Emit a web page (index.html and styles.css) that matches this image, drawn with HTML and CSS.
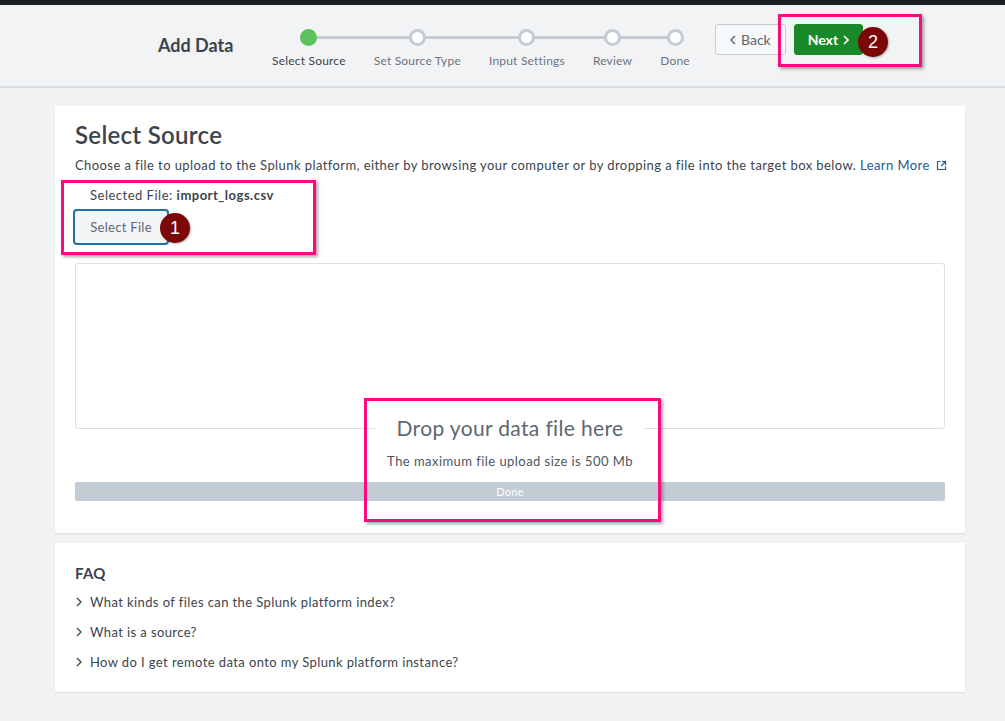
FILE: index.html
```html
<!DOCTYPE html>
<html lang="en">
<head>
<meta charset="utf-8">
<title>Add Data</title>
<link rel="stylesheet" href="styles.css">
</head>
<body>
<div class="topbar"></div>
<header class="header">
  <h1 class="title">Add Data</h1>
  <ol class="stepper">
    <li class="step active"><span class="dot"></span><span class="label">Select Source</span></li>
    <li class="step"><span class="dot"></span><span class="label">Set Source Type</span></li>
    <li class="step"><span class="dot"></span><span class="label">Input Settings</span></li>
    <li class="step"><span class="dot"></span><span class="label">Review</span></li>
    <li class="step"><span class="dot"></span><span class="label">Done</span></li>
  </ol>
  <div class="actions">
    <button class="btn btn-back"><svg class="chev" width="6" height="10" viewBox="0 0 6 10"><path d="M5 1L1 5l4 4" fill="none" stroke="currentColor" stroke-width="1.5"/></svg>Back</button>
    <button class="btn btn-next">Next<svg class="chev" width="6" height="10" viewBox="0 0 6 10"><path d="M1 1l4 4-4 4" fill="none" stroke="currentColor" stroke-width="1.7"/></svg></button>
  </div>
  <span class="annot annot-next"></span>
  <span class="badge badge-2">2</span>
</header>

<main class="page">
  <section class="card source">
    <h2 class="heading">Select Source</h2>
    <p class="desc">Choose a file to upload to the Splunk platform, either by browsing your computer or by dropping a file into the target box below. <a class="learn" href="#">Learn More <svg width="11" height="11" viewBox="0 0 11 11"><path d="M4.5 1.5h-3v8h8v-3" fill="none" stroke="currentColor" stroke-width="1.2"/><path d="M6 1.5h3.5V5M9.5 1.5L5 6" fill="none" stroke="currentColor" stroke-width="1.2"/></svg></a></p>
    <p class="selected">Selected File: <strong>import_logs.csv</strong></p>
    <button class="btn-select">Select File</button>
    <div class="dropzone"></div>
    <div class="drop-legend">Drop your data file here</div>
    <p class="max">The maximum file upload size is 500 Mb</p>
    <div class="progress">Done</div>

    <span class="annot annot-file"></span>
    <span class="badge badge-1">1</span>
    <span class="annot annot-drop"></span>
  </section>

  <section class="card faq">
    <h3 class="faq-title">FAQ</h3>
    <ul class="faq-list">
      <li><svg width="6" height="10" viewBox="0 0 6 10"><path d="M1 1l4 4-4 4" fill="none" stroke="currentColor" stroke-width="1.3"/></svg>What kinds of files can the Splunk platform index?</li>
      <li><svg width="6" height="10" viewBox="0 0 6 10"><path d="M1 1l4 4-4 4" fill="none" stroke="currentColor" stroke-width="1.3"/></svg>What is a source?</li>
      <li><svg width="6" height="10" viewBox="0 0 6 10"><path d="M1 1l4 4-4 4" fill="none" stroke="currentColor" stroke-width="1.3"/></svg>How do I get remote data onto my Splunk platform instance?</li>
    </ul>
  </section>
</main>
</body>
</html>
```

FILE: styles.css
```css
* { box-sizing: border-box; }
html, body { margin: 0; padding: 0; }
body {
  background: #f0f2f4;
  font-family: Lato, "Open Sans", "Liberation Sans", sans-serif;
  color: #3c444d;
  width: 1005px;
  min-height: 721px;
}
.topbar { height: 5px; background: #1b1e22; }

.header {
  position: relative;
  height: 83px;
  background: #f2f3f5;
  border-bottom: 2px solid #d9dde2;
  display: flex;
  align-items: flex-start;
  padding-left: 158px;
}
.title {
  margin: 30px 0 0;
  font-size: 18px;
  line-height: 20px;
  font-weight: 700;
  color: #3c444d;
  width: 75px;
  white-space: nowrap;
}
.stepper {
  position: relative;
  list-style: none;
  margin: 24px 0 0 39px;
  padding: 0;
  display: flex;
  gap: 28px;
}
.stepper::before {
  content: "";
  position: absolute;
  left: 35px;
  right: 14px;
  top: 7px;
  height: 3px;
  background: #c3cbd4;
}
.step {
  position: relative;
  display: flex;
  flex-direction: column;
  align-items: center;
}
.dot {
  width: 17px;
  height: 17px;
  border-radius: 50%;
  background: #fff;
  border: 3px solid #c3cbd4;
}
.step.active .dot { background: #5cc05c; border-color: #5cc05c; }
.label {
  margin-top: 8px;
  font-size: 12px;
  line-height: 14px;
  letter-spacing: 0.2px;
  color: #6b7480;
  white-space: nowrap;
}
.step.active .label { color: #3c444d; }

.actions {
  display: flex;
  gap: 8px;
  margin: 19px 0 0 25px;
}
.btn {
  height: 31px;
  border-radius: 3px;
  font-family: inherit;
  font-size: 14px;
  display: flex;
  align-items: center;
  justify-content: center;
  gap: 5px;
  padding: 0;
}
.btn-back {
  width: 71px;
  background: #f7f8fa;
  border: 1px solid #c3cbd4;
  color: #5c6773;
}
.btn-next {
  width: 69px;
  background: #1a8929;
  border: 1px solid #1a8929;
  color: #fff;
  font-weight: 700;
}

.annot {
  position: absolute;
  border: 3px solid #fb0a80;
  box-shadow: 2px 2px 3px rgba(0,0,0,0.35);
  pointer-events: none;
}
.annot-next { left: 778px; top: 9px; width: 144px; height: 53px; }
.badge {
  position: absolute;
  width: 30px;
  height: 30px;
  border-radius: 50%;
  background: #7b0707;
  color: #fff;
  font-family: "Liberation Sans", Arial, sans-serif;
  font-size: 18px;
  line-height: 30px;
  text-align: center;
  box-shadow: 1px 1px 2px rgba(0,0,0,0.3);
}
.badge-2 { left: 858px; top: 22px; }

.page {
  padding: 18px 40px 29px 55px;
}
.card {
  position: relative;
  width: 910px;
  background: #fff;
  box-shadow: 0 1px 1px rgba(0,0,0,0.08);
}
.source {
  padding: 14px 20px 32px;
  display: flex;
  flex-direction: column;
}
.heading {
  margin: 0;
  font-size: 24px;
  line-height: 30px;
  font-weight: 600;
  letter-spacing: 0.3px;
  color: #3c444d;
}
.desc {
  margin: 5px 0 0;
  font-size: 13px;
  line-height: 20px;
  letter-spacing: 0.42px;
  white-space: nowrap;
}
.learn { color: #215b91; text-decoration: none; }
.learn svg { vertical-align: -1px; margin-left: 3px; }
.selected {
  margin: 10px 0 0;
  padding-left: 15px;
  font-size: 13px;
  line-height: 20px;
  letter-spacing: 0.5px;
}
.selected strong { font-weight: 700; }
.btn-select {
  align-self: flex-start;
  margin: 4px 0 0 -2px;
  width: 96px;
  height: 36px;
  background: #f3f5f7;
  border: 2px solid #1f6fa8;
  border-radius: 4px;
  color: #5c6773;
  font-family: inherit;
  font-size: 13px;
  letter-spacing: 0.3px;
}
.dropzone {
  margin-top: 18px;
  height: 166px;
  border: 1px solid #dcdfe3;
  border-radius: 3px;
}
.drop-legend {
  align-self: center;
  margin-top: -15px;
  padding: 0 22px;
  background: #fff;
  font-size: 21px;
  line-height: 28px;
  letter-spacing: 0.35px;
  color: #5c6773;
}
.max {
  margin: 9px 0 0;
  text-align: center;
  font-size: 13px;
  line-height: 20px;
  letter-spacing: 0.45px;
  color: #4d5560;
}
.progress {
  margin-top: 11px;
  height: 19px;
  border-radius: 2px;
  background: #c3cbd4;
  color: #fff;
  font-size: 11px;
  line-height: 19px;
  letter-spacing: 0.3px;
  text-align: center;
}
.annot-file { left: 6px; top: 74px; width: 255px; height: 75px; }
.badge-1 { left: 105px; top: 107px; }
.annot-drop { left: 309px; top: 292px; width: 297px; height: 124px; }

.faq {
  margin-top: 10px;
  padding: 20px 20px 20px;
}
.faq-title {
  margin: 0;
  font-size: 15px;
  line-height: 20px;
  font-weight: 700;
  letter-spacing: 0.3px;
  color: #3c444d;
}
.faq-list {
  list-style: none;
  margin: 9px 0 0;
  padding: 0;
  display: flex;
  flex-direction: column;
  gap: 10px;
}
.faq-list li {
  font-size: 13px;
  line-height: 20px;
  letter-spacing: 0.4px;
  display: flex;
  align-items: center;
  gap: 8px;
  padding-left: 1px;
}
.faq-list svg { flex: none; }
```
